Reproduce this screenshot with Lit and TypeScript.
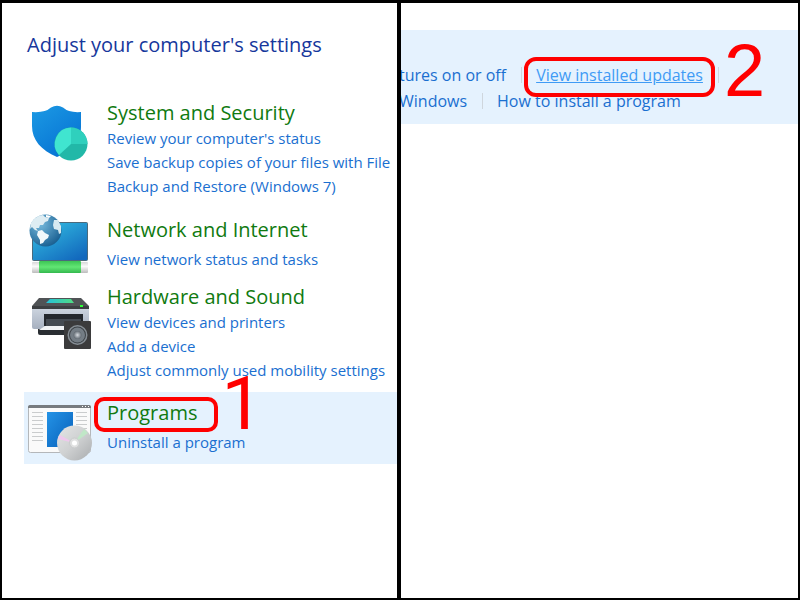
import { LitElement, html, css, svg } from "lit";
import { customElement } from "lit/decorators.js";
import { classMap } from "lit/directives/class-map.js";

const shield = svg`<svg viewBox="0 0 64 64" aria-hidden="true">
  <defs>
    <linearGradient id="sh" x1="0" y1="0" x2="0.7" y2="1"><stop offset="0" stop-color="#1c9ae4"/><stop offset="1" stop-color="#0672d3"/></linearGradient>
  </defs>
  <path d="M4 15Q17 16 23 10.500Q29 7 35 10.500Q41 16 53 15V30C53 45 41 55 29 60C13 53 4 43 4 29Z" fill="url(#sh)"/>
  <circle cx="43" cy="47" r="16.500" fill="#22b8a8"/>
  <path d="M43 47V30.500A16.500 16.500 0 0 0 31 58Z" fill="#40e5d0"/>
  <path d="M43 47V30.500A16.500 16.500 0 0 1 59.500 47Z" fill="#2fd0bd"/>
</svg>`;

const network = svg`<svg viewBox="0 1 64 64" aria-hidden="true">
  <defs>
    <linearGradient id="sc" x1="0" y1="0" x2="0.800" y2="1"><stop offset="0" stop-color="#35c3e4"/><stop offset="1" stop-color="#1268bd"/></linearGradient>
    <linearGradient id="cb" x1="0" y1="0" x2="0" y2="1"><stop offset="0" stop-color="#3cc554"/><stop offset="0.500" stop-color="#62e674"/><stop offset="1" stop-color="#34b94e"/></linearGradient>
    <linearGradient id="pl" x1="0" y1="0" x2="0" y2="1"><stop offset="0" stop-color="#d8d8d8"/><stop offset="0.400" stop-color="#fafafa"/><stop offset="1" stop-color="#bcbcbc"/></linearGradient>
    <radialGradient id="gl" cx="0.350" cy="0.300" r="0.750"><stop offset="0" stop-color="#75b9dc"/><stop offset="1" stop-color="#195f91"/></radialGradient>
  </defs>
  <rect x="4.500" y="9.500" width="55" height="38" rx="1" fill="url(#sc)" stroke="#4a6a7c"/>
  <rect x="4" y="49" width="56" height="11" rx="1" fill="url(#pl)"/>
  <rect x="11" y="48" width="42" height="12" rx="1" fill="url(#cb)"/>
  <circle cx="17.500" cy="17.500" r="16" fill="url(#gl)"/>
  <path d="M3 10C6 5 11 2 15 2L17 4L21 5L20 8L17 9L15 12L12 12L11 15L8 15L10 18L7 17L4 14L2 16Z" fill="#deedf3"/>
  <path d="M10 18L14 17L17 20L21 22L20 25L17 27L15 30L12 31L12 27L9 22Z" fill="#f2f8fa"/>
  <path d="M26 7L30 7L33 13L33 20L31 21L30 17L26 16L25 12Z" fill="#d8eaf1"/>
  <path d="M18 2L23 3L21 5L18 4Z" fill="#fff"/>
</svg>`;

const printer = svg`<svg viewBox="0 -11 64 64" aria-hidden="true">
  <defs>
    <linearGradient id="pb" x1="0" y1="0" x2="0" y2="1"><stop offset="0" stop-color="#cbd3de"/><stop offset="1" stop-color="#a6b0bf"/></linearGradient>
    <linearGradient id="gs" x1="0" y1="0" x2="1" y2="0"><stop offset="0" stop-color="#26c2da"/><stop offset="1" stop-color="#51dc83"/></linearGradient>
    <radialGradient id="sp"><stop offset="0" stop-color="#d8dde2"/><stop offset="1" stop-color="#636b73"/></radialGradient>
  </defs>
  <path d="M11 6H53L61 14V18H4V14Z" fill="#505356"/>
  <path d="M22 7H43L46 11H18Z" fill="url(#gs)"/>
  <path d="M4 17H61V35Q61 37 59 37H6Q4 37 4 35Z" fill="url(#pb)"/>
  <path d="M4 14H61V17H4Z" fill="#3c3f42"/>
  <rect x="52" y="13" width="3" height="2" fill="#2cff35"/>
  <rect x="16" y="22" width="39" height="12" fill="#24282d"/>
  <rect x="18" y="27" width="35" height="7" fill="#454b52"/>
  <path d="M10 37H53V43H12Q10 43 10 41Z" fill="#2a2e32"/>
  <path d="M17 34H50V38H11Z" fill="#f1f3f5"/>
  <rect x="36" y="29" width="27" height="28" rx="1" fill="#3b3b3c"/>
  <circle cx="49.500" cy="43" r="10" fill="#858d94"/>
  <circle cx="49.500" cy="43" r="8.500" fill="#3d4247"/>
  <circle cx="49.500" cy="43" r="7.500" fill="#747d85"/>
  <circle cx="49.500" cy="43" r="4" fill="url(#sp)"/>
</svg>`;

const lines = [0, 1, 2, 3, 4, 5, 6, 7];
const programs = svg`<svg viewBox="1 -2 64 64" aria-hidden="true">
  <defs>
    <linearGradient id="bl" x1="0" y1="0" x2="1" y2="1"><stop offset="0" stop-color="#2493e6"/><stop offset="1" stop-color="#0860ba"/></linearGradient>
    <linearGradient id="cd" x1="0" y1="0" x2="1" y2="1"><stop offset="0" stop-color="#e5e6e6"/><stop offset="0.500" stop-color="#cfd1d2"/><stop offset="1" stop-color="#a9acae"/></linearGradient>
  </defs>
  <rect x="1.500" y="6.500" width="62" height="47" rx="2" fill="#fafafa" stroke="#b4b7ba"/>
  <path d="M1 9V8Q1 6 3 6H62Q64 6 64 8V9Z" fill="#777b7f"/>
  <path d="M55 7.500h1M58 7.500h1M61 7.500h1" stroke="#fff"/>
  ${lines.map((i) => svg`<path d=${`M5 ${13.5 + i * 4}H16M49 ${13.5 + i * 4}H60`} stroke="#cacccd"/>`)}
  <rect x="20" y="13" width="26" height="35" fill="url(#bl)"/>
  <circle cx="47.500" cy="44" r="17.500" fill="url(#cd)"/>
  <path d="M47 44L33 36L31 40Z" fill="#efc8ed"/>
  <path d="M47 44L57 30L61 34Z" fill="#c0e7c7"/>
  <circle cx="47.500" cy="44" r="5" fill="#dfe0e0" stroke="#c9cbcc"/>
  <circle cx="47.500" cy="44" r="2.500" fill="#fff"/>
</svg>`;

const categories = [
  { title: "System and Security", icon: shield, mods: { far: true },
    links: ["Review your computer's status", "Save backup copies of your files with File", "Backup and Restore (Windows 7)"] },
  { title: "Network and Internet", icon: network, mods: { airy: true },
    links: ["View network status and tasks"] },
  { title: "Hardware and Sound", icon: printer, mods: {},
    links: ["View devices and printers", "Add a device", "Adjust commonly used mobility settings"] },
  { title: "Programs", icon: programs, mods: { airy: true, active: true },
    links: ["Uninstall a program"] },
];

@customElement("app-root")
export class AppRoot extends LitElement {
  static styles = css`
    :host { display: block; font-family: "Open Sans", "Noto Sans", sans-serif; font-size: 15px; line-height: 24px; }
    * { box-sizing: border-box; }
    .frame { display: grid; grid-template-columns: calc(50% - 3px) 1fr; column-gap: 4px; min-height: 100vh; background: #000; border: 2px solid #000; border-top-width: 3px; }
    .pane { background: #fff; min-width: 0; overflow: hidden; }
    h1, h2, ul { margin: 0; padding: 0; font-weight: 400; list-style: none; }
    a { color: #1a6fd0; text-decoration: none; white-space: nowrap; }
    h1 { color: #16379c; font-size: 20px; line-height: 28px; padding: 28px 0 0 25px; }
    .list { display: flex; flex-direction: column; gap: 13px; padding: 41px 0 0 22px; }
    .item { display: flex; gap: 15px; padding-left: 4px; }
    .item svg { width: 64px; height: 64px; flex: none; margin: -3px 0 -10px; overflow: visible; }
    .item h2 { font-size: 20px; line-height: 26px; }
    .item h2 a { color: #107a10; }
    .far { margin-bottom: 6px; }
    .airy h2 { margin-bottom: 4px; }
    .active { background: #e5f2fe; padding-top: 8px; padding-bottom: 10px; margin-top: -3px; }
    .marked { position: relative; }
    .ring { position: absolute; border: 4px solid #f00; border-radius: 10px; inset: -2px -21px -6px -13px; pointer-events: none; }
    .step { position: absolute; color: #f00; font-family: "Liberation Sans", Arial, sans-serif; font-size: 74px; line-height: 52px; left: 100%; pointer-events: none; }
    .one { font-family: Roboto, sans-serif; margin-left: 24px; bottom: -4px; }
    .two { margin-left: 21px; bottom: -14px; }
    .wide { border-radius: 12px; inset: -10px -12px -14px 2px; }
    .band { background: #e5f2fe; margin-top: 27px; padding: 32px 0 10px; font-size: 16px; }
    .row { display: flex; height: 26px; align-items: center; margin-left: -2px; }
    .row li + li { border-left: 1px solid #cfd6dd; margin-left: 15px; padding-left: 14px; line-height: 16px; }
    .row .end { height: 16px; }
    .hot { color: #3f9bf5; text-decoration: underline; }
  `;

  render() {
    return html`<main class="frame">
      <section class="pane">
        <h1>Adjust your computer's settings</h1>
        <div class="list">
          ${categories.map((c) => html`<div class=${classMap({ item: true, ...c.mods })}>
            ${c.icon}
            <div>
              <h2><a href="#" class="marked">${c.title}${"active" in c.mods
                ? html`<span class="ring"></span><span class="step one">1</span>` : ""}</a></h2>
              <ul>${c.links.map((l) => html`<li><a href="#">${l}</a></li>`)}</ul>
            </div>
          </div>`)}
        </div>
      </section>
      <section class="pane">
        <div class="band">
          <ul class="row">
            <li><a href="#">tures on or off</a></li>
            <li class="marked"><a href="#" class="hot">View installed updates</a><span class="ring wide"></span><span class="step two">2</span></li>
            <li class="end"></li>
          </ul>
          <ul class="row">
            <li><a href="#">Windows</a></li>
            <li><a href="#">How to install a program</a></li>
          </ul>
        </div>
      </section>
    </main>`;
  }
}
